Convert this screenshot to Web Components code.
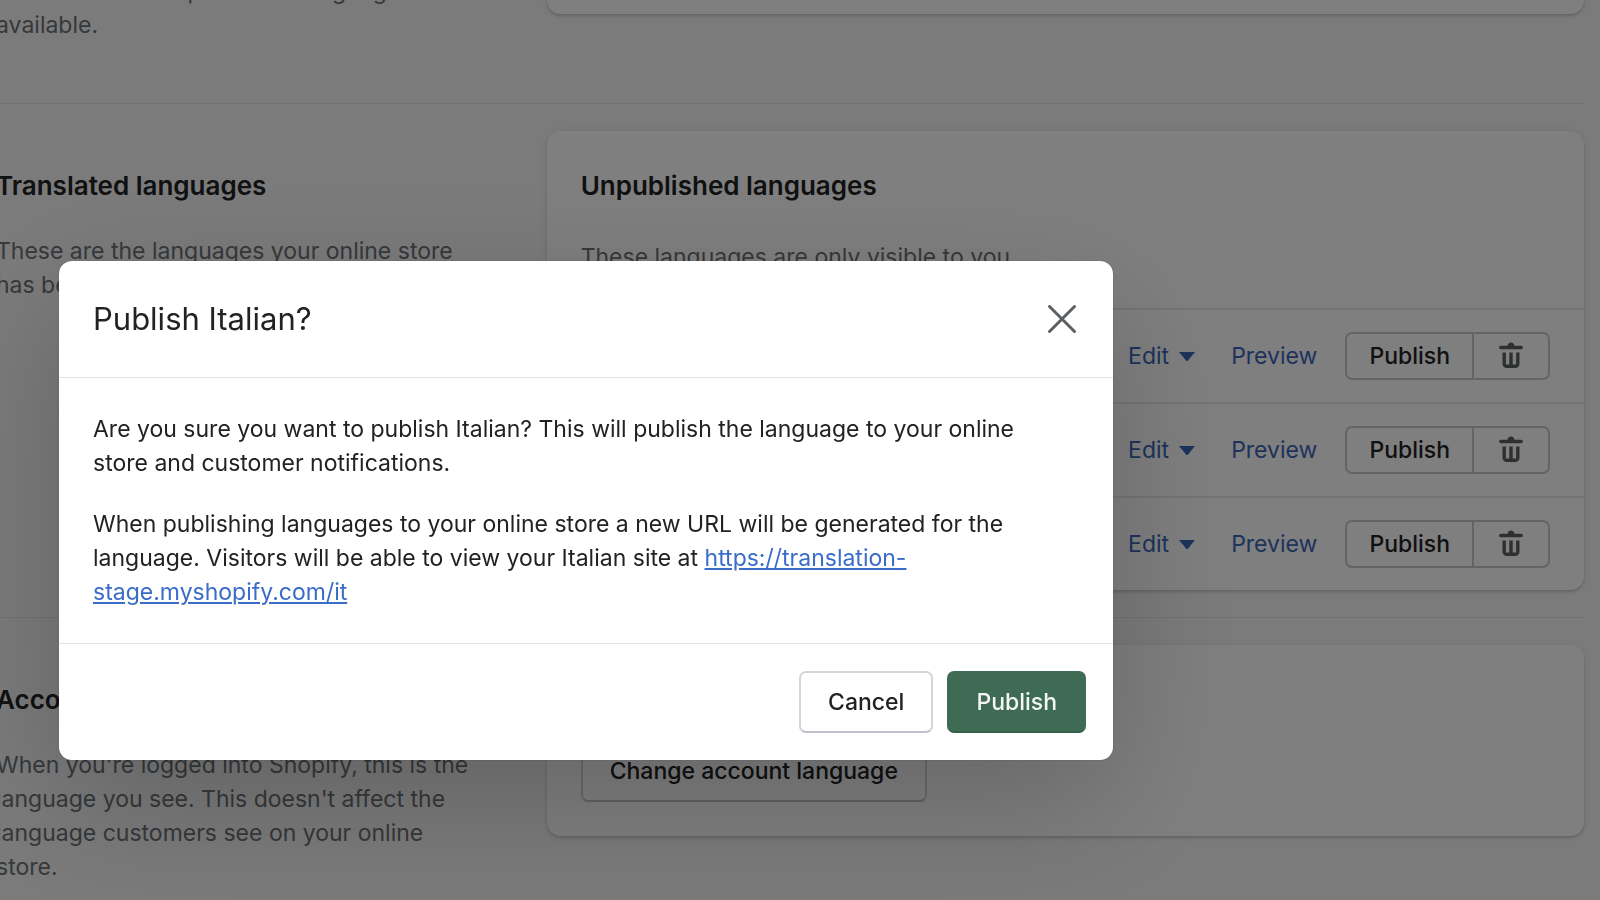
<!DOCTYPE html>
<html lang="en">
<head>
  <meta charset="utf-8">
  <meta name="viewport" content="width=device-width, initial-scale=1">
  <title>Languages</title>
  <style>
    body {
      margin: 0;
      height: 100vh;
      overflow: hidden;
      background: #f6f6f7;
      color: #202223;
      font: 400 23px/34px Inter, "Liberation Sans", sans-serif;
    }

    a {
      color: #3a6cc9;
    }
  </style>
</head>
<body>

  <settings-page>
    <settings-section>
      <p slot="about">store visitors see published languages available.</p>
      <settings-card></settings-card>
    </settings-section>

    <settings-section heading="Translated languages">
      <p slot="about">These are the languages your online store has been translated into.</p>
      <settings-card heading="Unpublished languages">
        <p slot="intro">These languages are only visible to you.</p>
        <language-row></language-row>
        <language-row></language-row>
        <language-row></language-row>
      </settings-card>
    </settings-section>

    <settings-section heading="Account language">
      <p slot="about">When you're logged into Shopify, this is the language you see. This doesn't affect the language customers see on your online store.</p>
      <settings-card class="account">
        <action-button slot="footer">Change account language</action-button>
      </settings-card>
    </settings-section>
  </settings-page>

  <modal-dialog heading="Publish Italian?">
    <p>Are you sure you want to publish Italian? This will publish the language to your online store and customer notifications.</p>
    <p>When publishing languages to your online store a new URL will be generated for the language. Visitors will be able to view your Italian site at <a href="https://translation-stage.myshopify.com/it">https://translation-stage.myshopify.com/it</a></p>
    <action-button slot="actions">Cancel</action-button>
    <action-button slot="actions" primary>Publish</action-button>
  </modal-dialog>

  <script>
    // Opens a shadow root on the element and fills it with the given markup
    function render(element, html) {
      element.attachShadow({ mode: 'open' });
      element.shadowRoot.innerHTML = html;
    }

    class SettingsPage extends HTMLElement {
      constructor() {
        super();
        // The page is scrolled down a little, so the top is out of view
        render(this, `
          <style>
            :host {
              display: block;
              margin: -87px 16px 0 -4px;
            }
          </style>
          <slot></slot>
        `);
      }
    }

    class SettingsSection extends HTMLElement {
      connectedCallback() {
        const heading = this.getAttribute('heading');
        render(this, `
          <style>
            :host {
              display: grid;
              grid-template-columns: minmax(0, 1fr) minmax(0, 2fr);
              align-items: start;
              gap: 32px;
              padding: 27px 0;
            }
            :host(:not(:first-child)) {
              border-top: 1px solid #dfe1e2;
            }
            aside {
              padding: 34px 34px 34px 0;
            }
            h2 {
              margin: 0 0 28px;
              font-size: 26px;
              line-height: 41px;
              font-weight: 600;
            }
            ::slotted(p) {
              margin: 0;
              color: #6d7175;
            }
          </style>
          <aside>
            ${heading ? `<h2>${heading}</h2>` : ''}
            <slot name="about"></slot>
          </aside>
          <slot></slot>
        `);
      }
    }

    class SettingsCard extends HTMLElement {
      connectedCallback() {
        const heading = this.getAttribute('heading');
        render(this, `
          <style>
            :host {
              display: block;
              min-height: 74px;
              background: #fff;
              border-radius: 14px;
              box-shadow: 0 0 8px rgba(23, 24, 24, .06), 0 2px 3px rgba(0, 0, 0, .16);
            }
            :host(.account) {
              display: flex;
              align-items: flex-end;
              box-sizing: border-box;
              min-height: 191px;
              padding: 34px;
            }
            header {
              padding: 34px;
            }
            h2 {
              margin: 0 0 34px;
              font-size: 26px;
              line-height: 41px;
              font-weight: 600;
            }
            ::slotted(p) {
              margin: 0;
              color: #6d7175;
            }
          </style>
          ${heading ? `<header><h2>${heading}</h2><slot name="intro"></slot></header>` : ''}
          <slot></slot>
          <slot name="footer"></slot>
        `);
      }
    }

    class LanguageRow extends HTMLElement {
      constructor() {
        super();
        render(this, `
          <style>
            :host {
              display: flex;
              justify-content: flex-end;
              align-items: center;
              padding: 22px 34px;
              border-top: 2px solid #e6e8e9;
            }
            button {
              margin: 0;
              padding: 0;
              border: 0;
              background: none;
              color: inherit;
              font: inherit;
            }
            .plain {
              display: flex;
              align-items: center;
              gap: 10px;
              margin-right: 36px;
              color: #3a66b8;
            }
            a.plain {
              margin-right: 28px;
              text-decoration: none;
            }
            .group {
              display: flex;
              height: 44px;
              border: 2px solid #c4c8cb;
              border-radius: 7px;
            }
            .group button {
              height: 44px;
              font-weight: 500;
            }
            .group .publish {
              padding: 0 22px;
            }
            .group .delete {
              display: flex;
              align-items: center;
              justify-content: center;
              width: 76px;
              border-left: 2px solid #c4c8cb;
              fill: #5c5f62;
            }
          </style>
          <button class="plain" type="button">Edit
            <svg width="16" height="9" viewBox="0 0 16 9" aria-hidden="true"><path fill="currentColor" d="M0 0h16L9 8.400a1.400 1.400 0 0 1-2 0z"/></svg>
          </button>
          <a class="plain" href="#preview">Preview</a>
          <div class="group">
            <button class="publish" type="button">Publish</button>
            <button class="delete" type="button" aria-label="Delete">
              <svg width="34" height="34" viewBox="0 0 20 20" aria-hidden="true"><path d="M8 3.994c0-1.101.895-1.994 2-1.994s2 .893 2 1.994h4c.552 0 1 .446 1 .997a1 1 0 0 1-1 .997h-12c-.552 0-1-.447-1-.997s.448-.997 1-.997h4zm-3 10.514v-6.508h2v6.508a.5.5 0 0 0 .5.498h1.500v-7.006h2v7.006h1.500a.5.5 0 0 0 .5-.498v-6.508h2v6.508a2.496 2.496 0 0 1-2.500 2.492h-5c-1.380 0-2.500-1.116-2.500-2.492z"/></svg>
            </button>
          </div>
        `);
      }
    }

    class ActionButton extends HTMLElement {
      constructor() {
        super();
        render(this, `
          <style>
            :host {
              display: block;
            }
            button {
              display: block;
              box-sizing: border-box;
              height: 62px;
              margin: 0;
              padding: 0 27px;
              border: 2px solid #d2d5d9;
              border-bottom-color: #bfc2c8;
              border-radius: 7px;
              background: #fff;
              color: #202223;
              font: inherit;
              font-weight: 500;
            }
            :host([primary]) button {
              border-color: #3f6b55;
              border-bottom-color: #356049;
              background: #3f6b55;
              color: #f3f6f4;
            }
          </style>
          <button type="button"><slot></slot></button>
        `);
      }
    }

    class ModalDialog extends HTMLElement {
      connectedCallback() {
        render(this, `
          <style>
            :host {
              position: fixed;
              inset: 0;
              display: flex;
              align-items: flex-start;
              padding: 261px 59px 0;
              background: rgba(0, 0, 0, .5);
            }
            .dialog {
              flex: 0 1 1054px;
              border-radius: 13px;
              background: #fff;
              box-shadow: 0 44px 136px rgba(0, 0, 0, .2), 0 0 2px rgba(0, 0, 0, .2);
            }
            header {
              display: flex;
              align-items: center;
              justify-content: space-between;
              padding: 34px;
              border-bottom: 1px solid #e1e3e5;
            }
            h1 {
              margin: 0;
              font-size: 31px;
              line-height: 48px;
              font-weight: 400;
            }
            header button {
              display: flex;
              padding: 0;
              border: 0;
              background: none;
              color: #5c5f62;
            }
            .content {
              display: flex;
              flex-direction: column;
              gap: 27px;
              padding: 34px 68px 34px 34px;
            }
            ::slotted(p) {
              margin: 0;
            }
            footer {
              display: flex;
              justify-content: flex-end;
              gap: 14px;
              padding: 27px;
              border-top: 1px solid #e1e3e5;
            }
          </style>
          <div class="dialog" role="dialog" aria-modal="true" aria-labelledby="title">
            <header>
              <h1 id="title">${this.getAttribute('heading')}</h1>
              <button type="button" aria-label="Close">
                <svg width="34" height="34" viewBox="0 0 34 34" fill="none" stroke="currentColor" stroke-width="3" stroke-linecap="round" aria-hidden="true"><path d="M4.500 4.500l25 25M29.500 4.500l-25 25"/></svg>
              </button>
            </header>
            <div class="content"><slot></slot></div>
            <footer><slot name="actions"></slot></footer>
          </div>
        `);
      }
    }

    customElements.define('settings-page', SettingsPage);
    customElements.define('settings-section', SettingsSection);
    customElements.define('settings-card', SettingsCard);
    customElements.define('language-row', LanguageRow);
    customElements.define('action-button', ActionButton);
    customElements.define('modal-dialog', ModalDialog);
  </script>
</body>
</html>
